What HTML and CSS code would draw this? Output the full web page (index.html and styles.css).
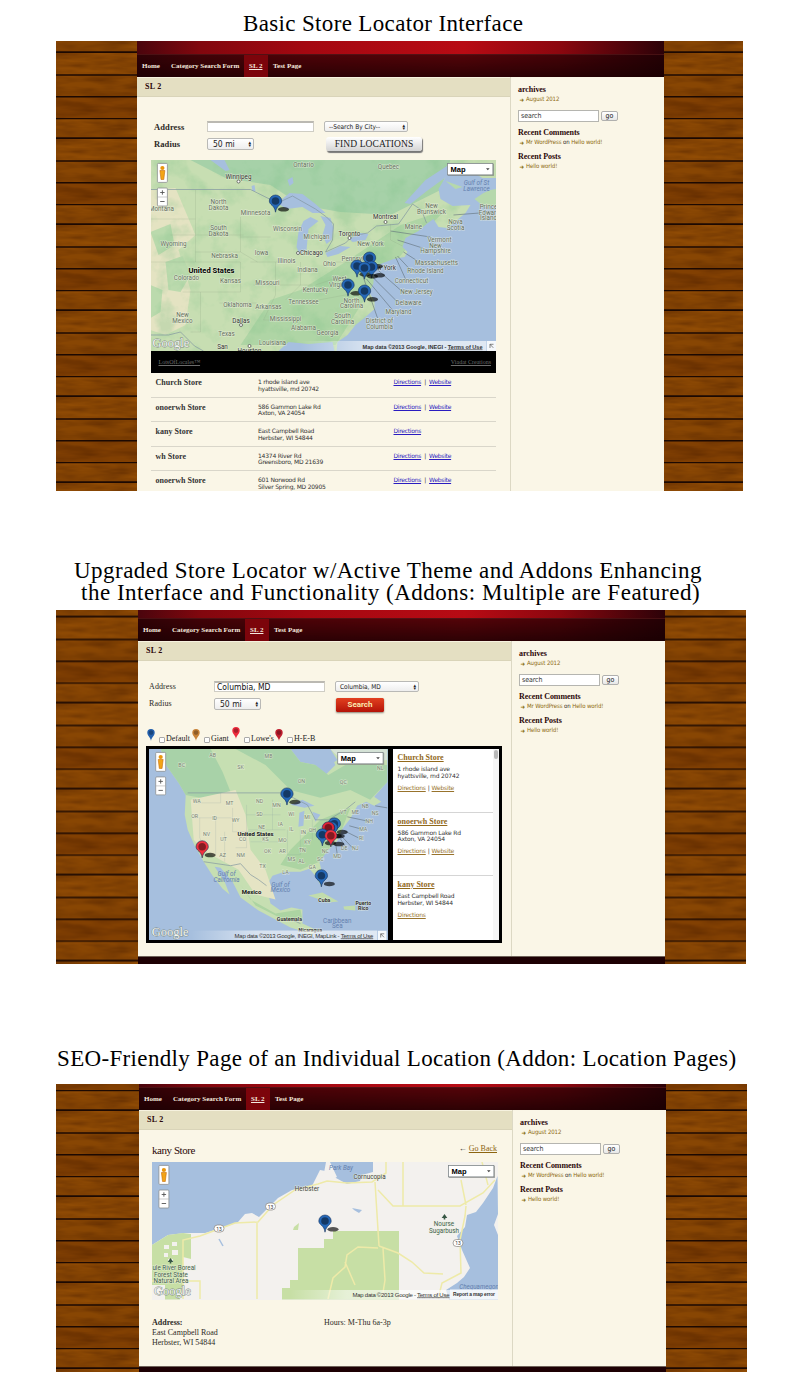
FILE: index.html
```html
<!DOCTYPE html>
<html lang="en">
<head>
<meta charset="utf-8">
<title>Store Locator</title>
<link rel="stylesheet" href="styles.css">
</head>
<body>
<svg class="defs" width="0" height="0" aria-hidden="true">
  <defs>
    <filter id="grain" x="0" y="0" width="100%" height="100%" color-interpolation-filters="sRGB"><feTurbulence type="fractalNoise" baseFrequency="0.025 0.13" numOctaves="3" seed="4"/><feColorMatrix values="0 0 0 0 0.3  0 0 0 0 0.12  0 0 0 0 0  0.9 0 0 0 -0.25"/></filter>
    <filter id="relief" x="0" y="0" width="100%" height="100%" color-interpolation-filters="sRGB"><feTurbulence type="fractalNoise" baseFrequency="0.045" numOctaves="4" seed="8"/><feColorMatrix values="0 0 0 0 0.5  0 0 0 0 0.76  0 0 0 0 0.54  3 0 0 0 -1.4"/></filter>
    <pattern id="wood" width="90" height="86" patternUnits="userSpaceOnUse">
      <rect width="90" height="86" fill="#914c04"/>
      <rect y="23" width="90" height="22" fill="#884603"/>
      <rect y="45" width="90" height="22" fill="#824002"/>
      <rect width="90" height="86" filter="url(#grain)"/>
      <path d="M0 .4H90M0 23H90M0 44.7H90M0 66.6H90M0 85.9H90" stroke="#1c0902" stroke-width="1.4"/>
    </pattern>
    <symbol id="pin" viewBox="-8 -9 24 20" overflow="visible">
      <ellipse cx="8" cy="6.300" rx="5.500" ry="2.300" fill="#000" opacity=".65"/>
      <path d="M0 9.200C-.8 2 -6.200 2-6.200-2A6.200 6 0 0 1 6.200-2C6.200 2 1.200 2 0 9.200Z" fill="currentColor" stroke="#16335c" stroke-width=".6"/>
      <circle cy="-2" r="3.800" fill="#000" opacity=".45"/>
    </symbol>
    <symbol id="drop" viewBox="0 0 8 12">
      <path d="M4 12C3.500 8 .3 7 .3 3.800A3.700 3.700 0 0 1 7.700 3.800C7.700 7 4.500 8 4 12Z" fill="currentColor"/><circle cx="4" cy="3.600" r="2.300" fill="#000" opacity=".28"/>
    </symbol>
    <symbol id="controls" viewBox="0 0 12 46" overflow="visible">
      <rect x=".4" y=".4" width="10" height="19" rx="1" fill="#fff" stroke="#8b8f90" stroke-width=".8"/>
      <circle cx="5.400" cy="5" r="2.100" fill="#e9960c"/><path d="M2.900 7.500H7.900L7.200 13 6.800 16.500H4L3.600 13Z" fill="#f3a416" stroke="#c66d0b" stroke-width=".6"/>
      <rect x=".4" y="25" width="10" height="18" rx="1" fill="#fff" stroke="#8b8f90" stroke-width=".8"/>
      <path d="M.4 34H10.400" stroke="#aaa" stroke-width=".6"/>
      <path d="M3.200 29.500H7.600M5.400 27.300V31.700M3.200 38.500H7.600" stroke="#555" stroke-width=".9"/>
    </symbol>
    <symbol id="maptype" viewBox="0 0 46 12" overflow="visible">
      <rect x="1" y="1" width="46" height="12" fill="#777" opacity=".55"/>
      <rect x=".4" y=".4" width="45.500" height="11.500" fill="#fff" stroke="#7d8588" stroke-width=".8"/>
      <text x="3.500" y="8.800" class="maptype">Map</text><path d="M39 5.200H42.600L40.800 7.300Z" fill="#444"/>
    </symbol>
    <symbol id="resize" viewBox="0 0 9 10"><rect width="9" height="10" fill="#f5f8fb"/><path d="M3 7V3.300H6.500M3 3.300L6.300 6.800" fill="none" stroke="#555" stroke-width=".7"/></symbol>
    <linearGradient id="fade"><stop offset="0" stop-color="#fff" stop-opacity="0"/><stop offset=".35" stop-color="#fff" stop-opacity=".55"/><stop offset="1" stop-color="#fff" stop-opacity=".65"/></linearGradient>
  </defs>
</svg>

<main>
<section class="demo demo-basic">
  <h1 class="t1">Basic Store Locator Interface</h1>
  <div class="shot">
    <svg class="wood"><g transform="translate(0 11)"><rect y="-86" width="90" height="560" fill="url(#wood)"/></g></svg>
    <div class="site">
      <header><nav><a>Home</a><a>Category Search Form</a><a class="active"><u>SL 2</u></a><a>Test Page</a></nav></header>
      <div class="cols">
        <div class="content">
          <h2>SL 2</h2>
          <div class="form">
            <label>Address</label><span class="input"></span><span class="select city"><span class="opt">--Search By City--</span><i>▴<br>▾</i></span>
            <label>Radius</label><span class="select radius"><span class="opt">50 mi</span><i>▴<br>▾</i></span><span class="find">FIND LOCATIONS</span>
          </div>
          <svg class="map" viewBox="150.500 160 345.500 191">
            <rect x="150" y="160" width="346" height="191" fill="#c7deb2"/>
            <path d="M150 160H450L440 190 390 215 340 212 300 205 270 185 225 178 190 160Z" fill="#a6d1a8"/>
            <path d="M150 190L175 188 195 235 178 250 190 290 185 325 165 335 150 330Z" fill="#e4e3c2"/>
            <path d="M165 262L182 256 190 275 180 292 168 290ZM150 232L170 224 174 245 158 255ZM150 285L162 290 160 312 150 318Z" fill="#bbdaad"/>
            <path d="M300 290L345 262 400 225 445 210 405 250 370 290 335 345 240 345 270 300Z" fill="#afd5a5"/>
            <rect x="150" y="160" width="346" height="191" filter="url(#relief)" opacity=".3"/>
            <g fill="#a6bfde">
              <path d="M448 172L458 164 472 172 482 178 496 178V351H336L337 342 347 335 355 325 365 317 374 309 374 301 369 293 373 283 373 272 380 264 393 259 404 257 407 252 402 247 405 238 418 231 426 224 433 219 438 227 447 228 465 213 470 205 452 206 440 199 438 189Z"/>
              <path d="M425 180L448 165 456 170 440 181 425 192 410 204 404 203Z"/>
              <path d="M277 203L289 193 302 194 315 204 325 213 312 213 302 207 286 209ZM303 221L310 217 318 221 308 229 306 250 299 254 296 247 298 232ZM320 216L330 218 333 228 331 240 326 244 322 235 325 225ZM325 253L340 246 350 247 338 254 327 257ZM349 239L360 233 368 234 365 240 352 242Z"/>
              <path d="M210 160H224L229 170 225 171ZM278 351L288 342 308 344 332 342 334 351ZM287 180L292 177 293 183 289 186ZM251 186L254 185 255 191 252 191Z"/>
            </g>
            <path d="M474 199L483 193 490 190 496 189V205L484 207ZM445 181L462 187 455 189Z" fill="#b6d8ac"/>
            <g fill="none" stroke="#8397a0" stroke-width=".7"><path d="M150 189.500H250L257 193 277 203 292 196 315 209 326 217 333 224 332 240 325 252 345 243 352 236 367 233 376 226 398 224 403 217 412 204 421 210 426 223"/><path d="M150 335H168L180 332 194 346 203 351"/></g>
            <path d="M150 219H195V190M195 219V262H150M170 235H243M195 252H240M182 292H240V262H195M200 292V332H190M219 303H256M240 217V252L257 262M240 237H270M250 262H290M253 285H312M275 262V295L263 320H290M315 285L345 275M300 262V285L285 300M335 262H365M390 224V240L402 246M318 300L350 294" fill="none" stroke="#8aa184" stroke-width=".4" opacity=".55"/>
            <g class="leader"><path d="M390 231L430 237M397 240L422 248M403 252L417 261M397 256L410 270M395 257L405 279M375 268L400 290M371 276L397 302M366 279L392 310M362 275L377 318M453 215L479 213"/></g>
            <g class="lbl">
              <text x="303" y="167">Ontario</text><text x="388" y="169">Quebec</text>
              <text x="218" y="204">North</text><text x="218" y="209.500">Dakota</text><text x="255" y="215">Minnesota</text>
              <text x="218" y="230">South</text><text x="218" y="236">Dakota</text><text x="287" y="231">Wisconsin</text><text x="161" y="211">Montana</text>
              <text x="173" y="246">Wyoming</text><text x="224" y="258">Nebraska</text><text x="261" y="254.500">Iowa</text><text x="316" y="239">Michigan</text>
              <text x="286" y="262.500">Illinois</text><text x="307" y="272">Indiana</text><text x="329" y="266">Ohio</text><text x="186" y="280">Colorado</text><text x="230" y="283">Kansas</text><text x="267" y="285">Missouri</text>
              <text x="315" y="292">Kentucky</text><text x="237" y="307">Oklahoma</text><text x="268" y="309">Arkansas</text><text x="303" y="304">Tennessee</text><text x="182" y="317">New</text><text x="182" y="322.500">Mexico</text>
              <text x="285" y="321">Mississippi</text><text x="303" y="329.500">Alabama</text><text x="327" y="335">Georgia</text><text x="226" y="336">Texas</text><text x="272" y="345">Louisiana</text>
              <text x="370" y="246">New York</text><text x="352" y="261">Pennsyl</text><text x="339" y="281">West</text><text x="339" y="286.500">Virginia</text><text x="351" y="302.500">North</text><text x="351" y="308">Carolina</text><text x="342" y="318">South</text><text x="342" y="323.500">Carolina</text>
              <text x="431" y="208">New</text><text x="431" y="214">Brunswick</text><text x="413" y="229">Maine</text><text x="455" y="224">Nova</text><text x="455" y="230">Scotia</text><text x="488" y="209">Prince</text><text x="487" y="214.500">Edwar</text><text x="488" y="220">Island</text>
              <text x="439" y="242">Vermont</text><text x="435" y="247.500">New</text><text x="435" y="253">Hampshire</text><text x="436" y="264.500">Massachusetts</text><text x="425" y="273">Rhode Island</text><text x="411" y="283">Connecticut</text><text x="416" y="294">New Jersey</text><text x="408" y="305">Delaware</text><text x="398" y="314">Maryland</text><text x="379" y="323">District of</text><text x="379" y="328.500">Columbia</text>
            </g>
            <g class="lbl water"><text x="476" y="185">Gulf of St</text><text x="476" y="190.500">Lawrence</text></g>
            <g class="lbl city"><text x="238" y="179">Winnipeg</text><text x="385" y="219">Montreal</text><text x="349" y="235.500">Toronto</text><text x="311" y="255">Chicago</text><text x="386" y="269.500">w York</text><text x="240.500" y="322.500">Dallas</text><text x="222" y="348.500">San</text><text x="249" y="352.500">Houston</text></g>
            <text x="211" y="273" class="lbl country">United States</text>
            <g fill="#fff" stroke="#444" stroke-width=".7"><circle cx="238" cy="181.500" r="1.500"/><circle cx="385" cy="222" r="1.500"/><circle cx="349" cy="238" r="1.500"/><circle cx="297.500" cy="253" r="1.500"/><circle cx="240.500" cy="325" r="1.500"/><circle cx="249" cy="346" r="1.500"/></g>
            <g color="#2568b8"><use href="#pin" x="267" y="194" width="24" height="20"/><use href="#pin" x="361" y="251" width="24" height="20"/><use href="#pin" x="348.500" y="259" width="24" height="20"/><use href="#pin" x="363" y="260" width="24" height="20"/><use href="#pin" x="356" y="261" width="24" height="20"/><use href="#pin" x="339.500" y="278" width="24" height="20"/><use href="#pin" x="356" y="284" width="24" height="20"/></g>
            <rect x="300" y="341" width="186" height="10" fill="url(#fade)"/><text x="362" y="348.500" class="credit b" textLength="120">Map data ©2013 Google, INEGI - <tspan text-decoration="underline">Terms of Use</tspan></text>
            <use href="#resize" x="486.500" y="341" width="9" height="10"/>
            <text x="152" y="347" class="google">Google</text>
            <use href="#controls" x="156.500" y="163" width="12" height="46"/><use href="#maptype" x="446.500" y="163" width="46" height="12"/>
          </svg>
          <div class="brandbar"><u>LotsOfLocales™</u><u>Viadat Creations</u></div>
          <ul class="stores">
            <li><b>Church Store</b><span>1 rhode island ave<br>hyattsville, md 20742</span><em><a>Directions</a> | <a>Website</a></em></li>
            <li><b>onoerwh Store</b><span>586 Gammon Lake Rd<br>Axton, VA 24054</span><em><a>Directions</a> | <a>Website</a></em></li>
            <li><b>kany Store</b><span>East Campbell Road<br>Herbster, WI 54844</span><em><a>Directions</a></em></li>
            <li><b>wh Store</b><span>14374 River Rd<br>Greensboro, MD 21639</span><em><a>Directions</a> | <a>Website</a></em></li>
            <li><b>onoerwh Store</b><span>601 Norwood Rd<br>Silver Spring, MD 20905</span><em><a>Directions</a> | <a>Website</a></em></li>
          </ul>
        </div>
        <aside><h3>archives</h3><p><a>August 2012</a></p><div class="search"><span>search</span><button>go</button></div><h3>Recent Comments</h3><p><a>Mr WordPress</a> on <a>Hello world!</a></p><h3 class="posts">Recent Posts</h3><p><a>Hello world!</a></p></aside>
      </div>
    </div>
    <svg class="wood"><g transform="translate(0 11)"><rect y="-86" width="90" height="560" fill="url(#wood)"/></g></svg>
  </div>
</section>

<section class="demo demo-upgraded">
  <h1><span class="t2">Upgraded Store Locator w/Active Theme and Addons Enhancing</span><span class="t3">the Interface and Functionality (Addons: Multiple are Featured)</span></h1>
  <div class="shot">
    <svg class="wood"><g transform="translate(0 6.500)"><rect y="-86" width="90" height="450" fill="url(#wood)"/></g></svg>
    <div class="site">
      <header><nav><a>Home</a><a>Category Search Form</a><a class="active"><u>SL 2</u></a><a>Test Page</a></nav></header>
      <div class="cols">
        <div class="content">
          <h2>SL 2</h2>
          <div class="form">
            <label>Address</label><span class="input">Columbia, MD</span><span class="select city"><span class="opt">Columbia, MD</span><i>▴<br>▾</i></span>
            <label>Radius</label><span class="select radius"><span class="opt">50 mi</span><i>▴<br>▾</i></span><button class="go">Search</button>
          </div>
          <div class="filters">
            <span class="f-default"><svg><use href="#drop"/></svg><i></i>Default</span><span class="f-giant"><svg><use href="#drop"/></svg><i></i>Giant</span><span class="f-lowes"><svg><use href="#drop"/></svg><i></i>Lowe's</span><span class="f-heb"><svg><use href="#drop"/></svg><i></i>H-E-B</span>
          </div>
          <div class="locator">
            <svg class="map" viewBox="148.500 749 238.500 191.500">
              <rect x="148" y="749" width="240" height="192" fill="#a6bfde"/>
              <path d="M160 749L166 766 178 783 185 795 184 815 187 830 194 846 203 862 212 876 222 889 229 895 224 882 214 867 220 868 232 882 240 898 258 911 275 920 290 928 300 931 312 937 313 929 302 924 302 910 291 908 280 911 270 904 266 886 272 876 284 872 300 872 309 869 315 876 321 887 323 878 319 862 327 851 337 841 342 829 350 819 357 806 366 802 374 806 381 802 374 797 387 782V749H328L335 765 325 775 315 765 300 762 290 749Z" fill="#c6dfb2"/>
              <path d="M160 749H210L222 772 230 792 210 800 185 795 178 783 166 766ZM235 749H290L300 762 315 765 328 775 345 765 387 765V782L370 800 350 790 320 798 290 790 265 765Z" fill="#a8d2a8"/>
              <path d="M190 800L235 790 245 815 250 850 265 870 275 900 255 895 238 870 205 852 193 840Z" fill="#e5e4c4"/>
              <path d="M290 850L320 820 350 808 342 829 327 851 319 862 300 870 280 865ZM240 885L250 900 275 914 300 910 302 920 285 921 255 906Z" fill="#acd4a2"/>
              <path d="M330 749H387V760L345 764Z" fill="#d5e2d6"/>
              <path d="M308 896L322 893 338 902 328 903ZM343 907L355 906 355 911 344 910Z" fill="#c1dcac"/>
              <path d="M290 805L302 800 314 806 304 808ZM299 813L304 811 303 826 298 827ZM312 812L320 815 315 822ZM318 828L327 822 329 825ZM316 752L322 749 330 749 337 760 325 768Z" fill="#a6bfde"/>
              <g fill="none" stroke="#8397a0" stroke-width=".7"><path d="M187 793H280L293 798 307 805 315 820 328 820 345 810 355 802M203 862L230 866 240 864 250 875 258 880 266 886M300 924L291 920"/><path d="M195 803H220V793M192 818H232M199 818V838L206 852M215 818V855M232 808V832H255M224 832V862M246 805V848H235M246 815H280M248 830H285M250 842H285M272 800V830M287 830V855H300M300 830V855M312 820V840" stroke-width=".3" opacity=".6"/></g>
              <path class="leader" d="M347 817L366 821M349 826L360 829M344 831L358 838M339 834L352 848M335 842L337 855M340 839L346 848M375 806L387 808"/>
              <g class="lbl st"><text x="212" y="757">AB</text><text x="181" y="767.500">BC</text><text x="240" y="769">SK</text><text x="268" y="758">MB</text><text x="301" y="783">ON</text><text x="343" y="784">QC</text><text x="196" y="803">WA</text><text x="229" y="805">MT</text><text x="259" y="803">ND</text><text x="276" y="807.500">MN</text><text x="194" y="818.500">OR</text><text x="214" y="820">ID</text><text x="235" y="822">WY</text><text x="259" y="816">SD</text><text x="291" y="816">WI</text><text x="307" y="819">MI</text><text x="206" y="836">NV</text><text x="223" y="841.500">UT</text><text x="242" y="841.500">CO</text><text x="261" y="829">NE</text><text x="280" y="826">IA</text><text x="291" y="831">IL</text><text x="303" y="834">IN</text><text x="312" y="832">OH</text><text x="265" y="841.500">KS</text><text x="282" y="842">MO</text><text x="307" y="844">KY</text><text x="267" y="853">OK</text><text x="282" y="853">AR</text><text x="302" y="852">TN</text><text x="222" y="857">AZ</text><text x="240" y="857">NM</text><text x="291" y="861.500">MS</text><text x="301" y="863">AL</text><text x="312" y="869">GA</text><text x="320" y="861">SC</text><text x="325" y="853">NC</text><text x="262" y="868">TX</text><text x="285" y="874">LA</text><text x="343" y="814">VT</text><text x="355" y="814">ME</text><text x="365" y="808">NB</text><text x="375" y="815">NS</text><text x="369" y="823">NH</text><text x="363" y="831">MA</text><text x="361" y="840">RI</text><text x="355" y="850">NJ</text><text x="344" y="850">DE</text><text x="337" y="858">MD</text><text x="380" y="770">NL</text></g>
              <g class="lbl water"><text x="226" y="876.500">Gulf of</text><text x="226" y="882">California</text><text x="280" y="887">Gulf of</text><text x="280" y="892.500">Mexico</text><text x="337" y="923" font-style="normal">Caribbean</text><text x="337" y="928.500" font-style="normal">Sea</text></g>
              <g class="lbl country2"><text x="255" y="836">United States</text><text x="251" y="894.500">Mexico</text></g>
              <g class="lbl nation"><text x="289" y="921">Guatemala</text><text x="324" y="902.500">Cuba</text><text x="363" y="905">Puerto</text><text x="363" y="910.500">Rico</text><text x="310" y="932">Nicaragua</text></g>
              <g color="#2568b8"><use href="#pin" x="278.500" y="787" width="24" height="20"/><use href="#pin" x="313" y="869" width="24" height="20"/><use href="#pin" x="326" y="817" width="24" height="20"/><use href="#pin" x="323" y="821" width="24" height="20"/></g>
              <g color="#e02436"><use href="#pin" x="320" y="821" width="24" height="20"/></g><g color="#2568b8"><use href="#pin" x="314" y="828" width="24" height="20"/></g><g color="#f0303e"><use href="#pin" x="322.500" y="829" width="24" height="20"/><use href="#pin" x="193.500" y="840" width="24" height="20"/></g>
              <rect x="190" y="931" width="187" height="10" fill="url(#fade)"/><text x="234" y="938" class="credit" textLength="139">Map data ©2013 Google, INEGI, MapLink - <tspan text-decoration="underline">Terms of Use</tspan></text>
              <use href="#resize" x="377.500" y="931" width="9" height="10"/>
              <text x="151" y="936" class="google">Google</text>
              <use href="#controls" x="154.500" y="752" width="12" height="46"/><use href="#maptype" x="337" y="752" width="46" height="12"/>
            </svg>
            <div class="results">
              <article><h4>Church Store</h4><p>1 rhode island ave<br>hyattsville, md 20742</p><p class="links"><a>Directions</a> | <a>Website</a></p></article>
              <article><h4>onoerwh Store</h4><p>586 Gammon Lake Rd<br>Axton, VA 24054</p><p class="links"><a>Directions</a> | <a>Website</a></p></article>
              <article><h4>kany Store</h4><p>East Campbell Road<br>Herbster, WI 54844</p><p class="links"><a>Directions</a></p></article>
            </div>
            <div class="track"><i></i></div>
          </div>
        </div>
        <aside><h3>archives</h3><p><a>August 2012</a></p><div class="search"><span>search</span><button>go</button></div><h3>Recent Comments</h3><p><a>Mr WordPress</a> on <a>Hello world!</a></p><h3 class="posts">Recent Posts</h3><p><a>Hello world!</a></p></aside>
      </div>
      <footer></footer>
    </div>
    <svg class="wood"><g transform="translate(0 6.500)"><rect y="-86" width="90" height="450" fill="url(#wood)"/></g></svg>
  </div>
</section>

<section class="demo demo-page">
  <h1 class="t4">SEO-Friendly Page of an Individual Location (Addon: Location Pages)</h1>
  <div class="shot">
    <svg class="wood"><g transform="translate(0 26)"><rect y="-86" width="90" height="380" fill="url(#wood)"/></g></svg>
    <div class="site">
      <header><nav><a>Home</a><a>Category Search Form</a><a class="active"><u>SL 2</u></a><a>Test Page</a></nav></header>
      <div class="cols">
        <div class="content">
          <h2>SL 2</h2>
          <div class="pagehead"><strong>kany Store</strong><span>← <a>Go Back</a></span></div>
          <svg class="map" viewBox="152 1162 345.500 137.500">
            <rect x="152" y="1162" width="346" height="138" fill="#f3f1ee"/>
            <path d="M152 1162H373L373 1172 362 1175 360 1181 347 1184 336 1178 331 1172 320 1170 312 1186 292 1190 278 1198 266 1210 259 1217 252 1213 245 1214 238 1222 225 1227 205 1233 185 1233 168 1235 152 1245Z" fill="#a6bfde"/>
            <path d="M326 1162L330 1162 337 1177 326 1182 320 1179 324 1173Z" fill="#f3f1ee"/>
            <path d="M497.500 1176L493 1188 483 1203 476 1212 467 1215 465 1227 457 1236 462 1250 470 1268 464 1277 457 1283 446 1290 449 1299.500H498V1235L494 1225 498 1214Z" fill="#a6bfde"/>
            <path d="M152 1245L168 1235 183 1233 191 1234V1259L183 1257 184 1280 180 1299.500H165V1285H152ZM282 1299.500V1288H290V1280H298V1248H324V1239H333V1231H399V1299.500ZM294 1227L299 1223 298 1230 293 1230Z" fill="#c7dfa5"/>
            <path d="M164 1245h5v4h-5zM172 1242h5v4h-5zM164 1253h4v4h-4zM172 1250h6v5h-6zM168 1259h5v3h-5z" fill="#f3f1ee"/>
            <g fill="none" stroke="#eeeaa8" stroke-width="1.500"><path d="M183 1299V1240L200 1236 235 1223 258 1222 273 1205 295 1190 318 1184 327 1181 347 1183 372 1182 386 1173V1162M257 1222V1299M375 1182L379 1246M378 1190L393 1206 460 1206 483 1193 495 1180M403 1162V1206M461 1180L466 1205M466 1206L465 1216 460 1240 461 1273 442 1283 438 1299M378 1248L358 1247 347 1255 345 1267 333 1278 328 1299M379 1246L398 1253 412 1262 424 1273 443 1274M383 1248L385 1280 382 1299M152 1281H200V1299M482 1162L488 1185M345 1262L355 1285"/></g>
            <path d="M219 1239L223 1246" stroke="#a6bfde" stroke-width="1.500" fill="none"/><path d="M352 1208L362 1210 359 1213 354 1210Z" fill="#a6bfde"/>
            <g fill="#fff" stroke="#85817b" stroke-width=".7"><rect x="214" y="1225" width="10" height="7" rx="3.500"/><rect x="265.500" y="1203" width="10" height="7" rx="3.500"/><rect x="453" y="1239.500" width="10" height="7" rx="3.500"/></g>
            <g class="lbl road"><text x="219" y="1230.700">13</text><text x="270.500" y="1208.700">13</text><text x="458" y="1245.200">13</text></g>
            <g fill="#365744"><path d="M170.500 1258l2.800 4h-2v1.500h-1.600v-1.500h-2zM444.500 1214l2.800 4h-2v1.500h-1.600v-1.500h-2z"/></g>
            <g class="lbl place"><text x="307" y="1191">Herbster</text><text x="369.500" y="1178.500">Cornucopia</text></g>
            <g class="lbl park"><text x="174" y="1270">ule River Boreal</text><text x="171" y="1276.700">Forest State</text><text x="171" y="1283.300">Natural Area</text><text x="444" y="1226">Nourse</text><text x="444" y="1232.500">Sugarbush</text></g>
            <g class="lbl water"><text x="341" y="1169.500">Park Bay</text><text x="479" y="1289">Chequamegon</text></g>
            <g color="#2568b8"><use href="#pin" x="317" y="1214" width="24" height="20"/></g>
            <rect x="290" y="1290" width="160" height="9.500" fill="url(#fade)"/><rect x="450" y="1289.500" width="48" height="10" fill="#fff" opacity=".85"/>
            <text x="352.500" y="1296.500" class="credit" textLength="97">Map data ©2013 Google - <tspan text-decoration="underline">Terms of Use</tspan></text><text x="453" y="1296" class="credit b small" textLength="42">Report a map error</text>
            <text x="154" y="1295" class="google">Google</text>
            <use href="#controls" x="158.500" y="1165" width="12" height="46"/><use href="#maptype" x="448" y="1165" width="46" height="12"/>
          </svg>
          <div class="info"><p><b>Address:</b><br>East Campbell Road<br>Herbster, WI 54844</p><p>Hours: M-Thu 6a-3p</p></div>
        </div>
        <aside><h3>archives</h3><p><a>August 2012</a></p><div class="search"><span>search</span><button>go</button></div><h3>Recent Comments</h3><p><a>Mr WordPress</a> on <a>Hello world!</a></p><h3 class="posts">Recent Posts</h3><p><a>Hello world!</a></p></aside>
      </div>
      <footer></footer>
    </div>
    <svg class="wood"><g transform="translate(0 26)"><rect y="-86" width="90" height="380" fill="url(#wood)"/></g></svg>
  </div>
</section>
</main>
</body>
</html>
```
FILE: styles.css
```css
* { box-sizing: border-box; }
body { margin: 0; background: #fff; height: 1399px; color: #2d2a26; font-family: Georgia, "Liberation Serif", serif; }
.defs { display: block; }
h1, h2, h3, h4, p, ul { margin: 0; padding: 0; }
i, em { font-style: normal; }
button { border: 0; padding: 0; margin: 0; }

h1 { font: 400 23px/22px "Liberation Serif", serif; color: #000; white-space: nowrap; }
h1 span { display: block; }
.t1 { letter-spacing: .35px; padding: 13px 0 0 243px; height: 41px; }
.demo-upgraded h1 { padding-top: 69px; height: 119px; }
.t2 { letter-spacing: .47px; padding-left: 74px; }
.t3 { letter-spacing: .51px; padding-left: 81px; }
.t4 { letter-spacing: .34px; padding: 84px 0 0 57px; height: 120px; }

.shot { display: flex; margin-left: 56px; overflow: hidden; }
.demo-basic .shot { width: 687px; height: 450px; }
.demo-upgraded .shot { width: 690px; height: 354px; }
.demo-page .shot { width: 691px; height: 288px; }
.wood { display: block; flex: 1; width: 10px; height: 100%; background: #7d4203; }
.wood:first-child { flex: none; width: 81px; }
.demo-upgraded .wood:first-child { width: 82px; }
.demo-page .wood:first-child { width: 83px; }
.site { width: 527px; flex: none; display: flex; flex-direction: column; background: #faf6e7; }

header { display: flex; align-items: flex-end; height: 36px; flex: none; background: linear-gradient(90deg, #4a050d, #82070e 12%, #a40811 32%, #b80b14 62%, #8c070f 80%, #2c0208); }
.demo-upgraded header { height: 31px; }
.demo-page header { height: 26px; }
nav { display: flex; width: 100%; height: 23px; border-top: 1px solid #8a2a2e66; background: linear-gradient(#200003aa, #180002dd); font: 700 7px/23px "Liberation Serif", serif; color: #f4e9df; white-space: nowrap; }
nav a { padding: 0 5px; }
nav a:nth-child(2) { width: 78px; }
nav a:first-child { width: 29px; }
nav .active { background: #7c040b; width: 24px; }

.cols { display: flex; flex: 1; min-height: 0; }
.content { width: 374px; flex: none; border-right: 1px solid #dcd8c4; }
h2 { height: 20px; padding-left: 8px; background: #e4dfc2; border-top: 1px solid #f6f2df; border-bottom: 1px solid #d9d4b9; color: #2c0809; font: 700 8px/18px "Liberation Serif", serif; letter-spacing: .3px; }

aside { padding: 8px 0 0 7px; font: 6px/9px "DejaVu Sans Condensed", sans-serif; letter-spacing: -.1px; }
h3 { font: 700 8px/9px "Liberation Serif", serif; letter-spacing: -.05px; color: #2c0809; }
aside p { padding-left: 8px; position: relative; white-space: nowrap; }
aside p::before { content: "➜"; color: #82690b; font-size: 6px; position: absolute; left: 1.500px; top: .5px; }
aside a { color: #8c6a10; }
.posts { margin-top: 6px; }
.search { display: flex; align-items: center; gap: 2px; margin: 7px 0 6px; }
.search span { width: 81px; height: 12px; padding-left: 2px; background: #fff; border: 1px solid #b5b5b0; font-size: 7px; line-height: 10px; letter-spacing: -.1px; color: #333; }
.search button { width: 17px; height: 10px; border: 1px solid #b0b0ae; border-radius: 2px; background: linear-gradient(#fff, #e7e7e7); font: 7px/7px "DejaVu Sans Condensed", sans-serif; color: #222; }

.form { display: grid; grid-template-columns: 53px 117px 100px; grid-auto-rows: 17.500px; align-items: center; }
.form label { font: 700 8.500px/10px "Liberation Serif", serif; letter-spacing: .1px; }
.input { display: block; width: 107px; height: 11px; background: #fff; border: 1px solid #cfcdc4; border-top: 2px solid #bbb9b2; font: 8.500px/8px "DejaVu Sans Condensed", sans-serif; color: #111; padding-left: 2px; }
.select { display: flex; justify-content: space-between; align-items: center; height: 11px; border: 1px solid #b9b9b6; border-radius: 2px; background: linear-gradient(#fff, #eee); color: #222; }
.select i { font: 5px/3px "DejaVu Sans", sans-serif; padding-right: 2px; }
.city { width: 84px; padding-left: 4px; font: 6.500px/8px "DejaVu Sans Condensed", sans-serif; }
.radius { width: 47px; height: 12px; padding-left: 5px; font: 8.500px/9px "DejaVu Sans Condensed", sans-serif; }
.find { width: 96px; height: 14px; margin-left: 2px; border-radius: 3px; background: linear-gradient(#fff, #d4d4d4); box-shadow: 1px 1.500px 1px #777; font: 9.500px/14px "Liberation Serif", serif; letter-spacing: .1px; color: #222; text-align: center; white-space: nowrap; }
.map { display: block; }
.demo-basic .form { padding-left: 17px; margin-top: 21px; height: 42px; }
.demo-basic .map { width: 345.500px; height: 191px; margin-left: 13.500px; }
.brandbar { display: flex; justify-content: space-between; width: 345.500px; height: 22px; margin-left: 13.500px; padding: 0 5px 0 8px; background: #000; color: #6c6c6c; font: 6px/23px "Liberation Serif", serif; }
.stores { list-style: none; width: 345.500px; margin-left: 13.500px; }
.stores li { display: grid; grid-template-columns: 102.500px 135.500px 1fr; height: 24.600px; padding: 6px 0 0 5px; border-bottom: 1px solid #d9d6ca; font: 6px/6.500px "DejaVu Sans", sans-serif; letter-spacing: -.22px; color: #333; white-space: nowrap; }
.stores b { font: 700 8px/7px "Liberation Serif", serif; letter-spacing: .02px; }
.stores em { word-spacing: 1.500px; letter-spacing: -.27px; }
.stores a { color: #2a1cc0; text-decoration: underline; }

.demo-upgraded .form { grid-template-columns: 65px 121px 100px; padding-left: 11px; margin-top: 17px; height: 49px; align-content: start; }
.demo-upgraded label { font-weight: 400; font-size: 8px; }
.demo-upgraded .input { width: 111px; }
.go { width: 48px; height: 14px; margin: 2px 0 0 1px; border-radius: 1.500px; background: linear-gradient(#e2401f, #b41308); box-shadow: 0 1px 2px #8a8175; color: #fbe9b0; font: 700 8px/14px Roboto, sans-serif; }
.filters { display: flex; height: 19px; padding-left: 9px; font: 8px/10px "Liberation Serif", serif; color: #222; align-items: flex-start; }
.filters span { display: flex; align-items: flex-end; height: 17px; white-space: nowrap; }
.filters svg { width: 8px; height: 12px; margin-bottom: 3px; }
.filters i { width: 6px; height: 6px; margin: 0 1px 1.500px 4px; border: 1px solid #aaa; border-radius: 1px; background: #fff; }
.f-default { width: 45px; } .f-giant { width: 40px; } .f-lowes { width: 43px; }
.f-default svg { color: #2360ad; } .f-giant svg { color: #c88237; } .f-lowes svg { color: #ee2a3c; margin-bottom: 5px; } .f-heb svg { color: #c01f30; }
.locator { display: flex; width: 356px; height: 197px; margin-left: 8px; padding: 3px; background: #000; }
.locator .map { width: 238.500px; height: 191px; flex: none; margin-right: 5px; }
.results { width: 100px; background: #fff; overflow: hidden; font: 6px/6.500px "DejaVu Sans", sans-serif; letter-spacing: -.18px; color: #333; white-space: nowrap; }
article { height: 63.500px; padding: 5px 0 0 5px; border-bottom: 1px solid #d5d5d5; }
article:last-child { border: 0; }
h4 { margin-bottom: 4px; color: #91691c; font: 700 8px/8px "Liberation Serif", serif; letter-spacing: 0; text-decoration: underline; }
.links { margin-top: 5.500px; letter-spacing: -.2px; word-spacing: .3px; }
.links a { color: #98732c; text-decoration: underline; }
.track { flex: 1; background: #f6f6f6; display: flex; justify-content: center; }
.track i { width: 4px; height: 9px; margin-top: 1px; border-radius: 2px; background: #b9b9b9; }
footer { flex: none; height: 8.500px; background: #1d0003; border-top: 1px solid #6e6259; }

.pagehead { display: flex; justify-content: space-between; width: 345px; height: 32px; margin-left: 13px; font: 8px/38px "Liberation Serif", serif; }
.pagehead strong { font: 400 11px/40px "Liberation Serif", serif; letter-spacing: -.45px; color: #2c0809; }
.pagehead a { color: #8c6410; text-decoration: underline; }
.demo-page .map { width: 345.500px; height: 137.500px; margin-left: 13px; }
.info { display: grid; grid-template-columns: 172px 1fr; margin: 18px 0 0 13px; font: 8px/10px "Liberation Serif", serif; letter-spacing: 0; }
.demo-page footer { height: 6px; }

.lbl { font: 6.300px Roboto, sans-serif; fill: #66705f; text-anchor: middle; stroke: #eef3e2; stroke-width: 1.200px; stroke-opacity: .6; paint-order: stroke; }
.lbl.city { fill: #333; width: auto; }
.lbl.country { font-weight: 700; font-size: 7.600px; fill: #000; }
.lbl.country2 { font-weight: 700; font-size: 6px; fill: #111; }
.lbl.nation { font-weight: 700; font-size: 5.200px; fill: #333; }
.lbl.water { fill: #6480ae; font-style: italic; stroke: none; }
.lbl.st { font-size: 5.300px; fill: #777f70; }
.lbl.road { font-size: 5px; fill: #333; stroke: none; }
.lbl.place { fill: #444; }
.lbl.park { fill: #43604e; }
.leader { fill: none; stroke: #5f6f78; stroke-width: .6px; }
.credit { font: 6px "Liberation Sans", sans-serif; fill: #333; }
.credit.b { font-weight: 700; font-size: 5.600px; }
.credit.small { font-size: 4.900px; }
.google { font: 12.500px "Liberation Serif", serif; fill: #f2f5f2; stroke: #7d8a84; stroke-width: .9px; paint-order: stroke; }
.maptype { font: 700 7.500px "Liberation Sans", sans-serif; fill: #000; }
```
